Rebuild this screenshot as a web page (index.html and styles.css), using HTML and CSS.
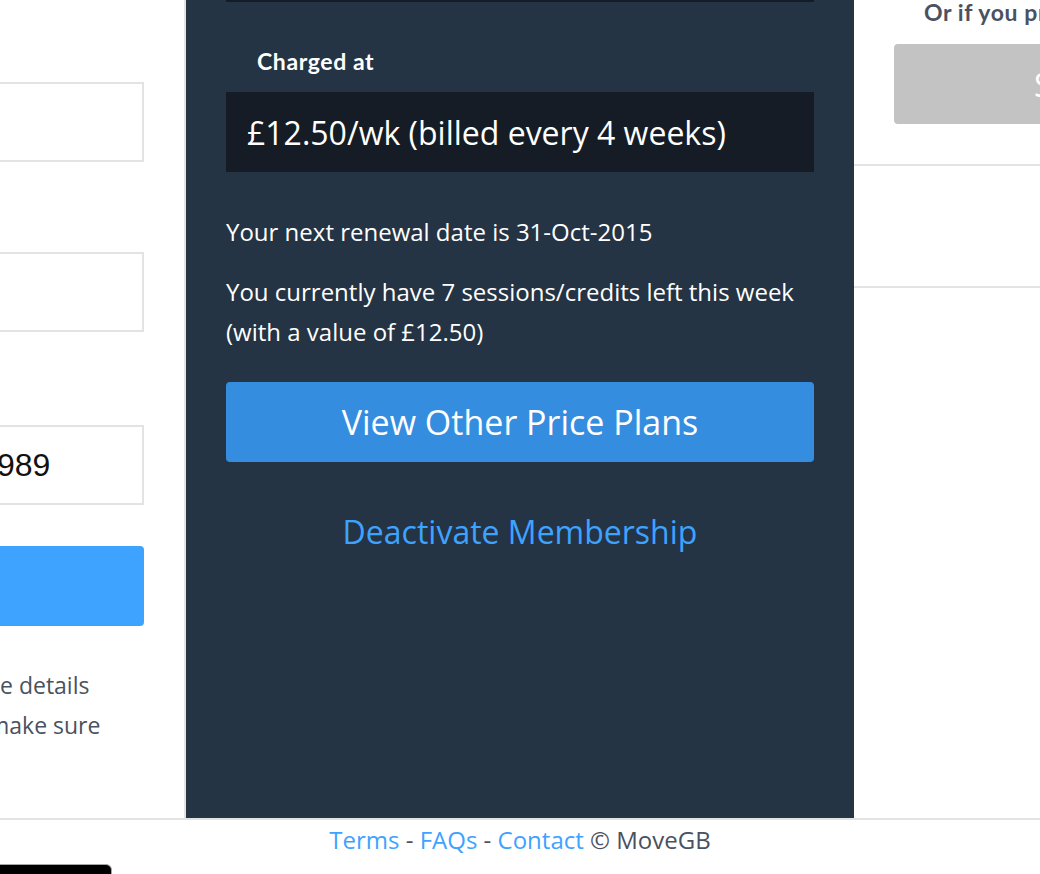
FILE: index.html
```html
<!DOCTYPE html>
<html lang="en">
<head>
    <meta charset="UTF-8">
    <meta name="viewport" content="width=device-width, initial-scale=1.0">
    <title>My Membership - MoveGB</title>
    <link rel="stylesheet" href="styles.css">
</head>
<body>
    <div class="columns">
        <section class="col-left">
            <div class="left-inner">
                <div class="field"></div>
                <div class="field field-2"></div>
                <div class="field field-3"><span class="field-value">989</span></div>
                <button class="btn-update" type="button"></button>
                <p class="help">
                    <span class="help-line">e details</span>
                    <span class="help-line cut">make sure</span>
                </p>
            </div>
        </section>

        <section class="col-plan">
            <div class="plan-name"></div>
            <h4 class="plan-label">Charged at</h4>
            <div class="plan-price">&pound;12.50/wk (billed every 4 weeks)</div>
            <p class="plan-info">Your next renewal date is 31-Oct-2015</p>
            <p class="plan-info">You currently have 7 sessions/credits left this week<br>(with a value of &pound;12.50)</p>
            <button class="btn-plans" type="button">View Other Price Plans</button>
            <a class="deactivate" href="#deactivate">Deactivate Membership</a>
        </section>

        <section class="col-right">
            <p class="alt-text">Or if you prefer, pay by PayPal</p>
            <button class="btn-alt" type="button">Subscribe</button>
            <div class="divider"></div>
            <div class="divider-gap"></div>
        </section>
    </div>

    <footer>
        <p><a href="#terms">Terms</a> - <a href="#faqs">FAQs</a> - <a href="#contact">Contact</a> &copy; MoveGB</p>
        <div class="app-badge"></div>
    </footer>
</body>
</html>
```

FILE: styles.css
```css
body {
    margin: 0;
    padding: 0;
    font-family: "Open Sans", sans-serif;
    background-color: #fff;
    color: #4a5160;
    overflow: hidden;
}
.columns {
    display: flex;
    width: 1520px;
    height: 818px;
}
.col-left {
    flex: 0 0 184px;
    border-right: 2px solid #e3e3e3;
    overflow: hidden;
}
.left-inner {
    margin-left: -256px;
    width: 400px;
}
.field {
    height: 76px;
    border: 2px solid #e3e3e3;
    margin-top: 82px;
    display: flex;
    align-items: center;
    justify-content: flex-end;
}
.field-2 {
    margin-top: 90px;
}
.field-3 {
    margin-top: 93px;
}
.field-value {
    font-family: "Liberation Sans", Arial, sans-serif;
    font-size: 32px;
    color: #111;
    width: 145px;
}
.btn-update {
    display: block;
    width: 100%;
    height: 80px;
    margin-top: 41px;
    border: none;
    border-radius: 4px;
    background-color: #3ea2ff;
}
.help {
    margin: 39px 0 0;
    font-size: 23px;
    line-height: 40px;
}
.help-line {
    display: block;
    padding-left: 256px;
}
.help-line.cut {
    padding-left: 244px;
}
.col-plan {
    flex: 0 0 588px;
    padding: 0 40px;
    background-color: #243444;
    color: #fff;
}
.plan-name {
    height: 80px;
    margin-top: -78px;
    background-color: #151c25;
}
.plan-label {
    margin: 45px 0 17px 31px;
    font-family: Lato, sans-serif;
    font-weight: bold;
    font-size: 23px;
    letter-spacing: 0.6px;
    line-height: 28px;
}
.plan-price {
    height: 80px;
    padding-left: 21px;
    display: flex;
    align-items: center;
    background-color: #151c25;
    font-size: 32px;
}
.plan-info {
    margin: 40px 0 0;
    font-size: 24px;
    line-height: 40px;
}
.plan-info + .plan-info {
    margin-top: 20px;
}
.btn-plans {
    display: block;
    width: 100%;
    height: 80px;
    margin-top: 30px;
    border: none;
    border-radius: 4px;
    background-color: #358de0;
    color: #fff;
    font-family: "Open Sans", sans-serif;
    font-size: 34px;
    cursor: pointer;
}
.deactivate {
    display: block;
    margin-top: 48px;
    text-align: center;
    color: #3ea2ff;
    text-decoration: none;
    font-size: 32px;
    line-height: 44px;
}
.col-right {
    flex: 0 0 476px;
    overflow: hidden;
}
.alt-text {
    margin: 0;
    padding-left: 70px;
    font-family: Lato, sans-serif;
    font-weight: bold;
    font-size: 23px;
    letter-spacing: 0.6px;
    line-height: 24px;
    white-space: nowrap;
}
.btn-alt {
    display: block;
    width: 426px;
    height: 80px;
    margin: 20px 0 0 40px;
    border: none;
    border-radius: 4px;
    background-color: #c3c3c3;
    color: #fff;
    font-family: "Open Sans", sans-serif;
    font-size: 32px;
}
.divider {
    margin-top: 40px;
    border-top: 2px solid #e3e3e3;
}
.divider-gap {
    height: 120px;
    border-bottom: 2px solid #e3e3e3;
}
footer {
    border-top: 2px solid #e3e3e3;
    text-align: center;
}
footer p {
    margin: 0;
    padding-top: 4px;
    font-size: 24px;
    line-height: 32px;
}
footer a {
    color: #3ea2ff;
    text-decoration: none;
}
.app-badge {
    width: 130px;
    height: 40px;
    margin: 8px 0 0 -20px;
    background-color: #000;
    border: 1px solid #a6a6a6;
    border-radius: 6px;
}
```
